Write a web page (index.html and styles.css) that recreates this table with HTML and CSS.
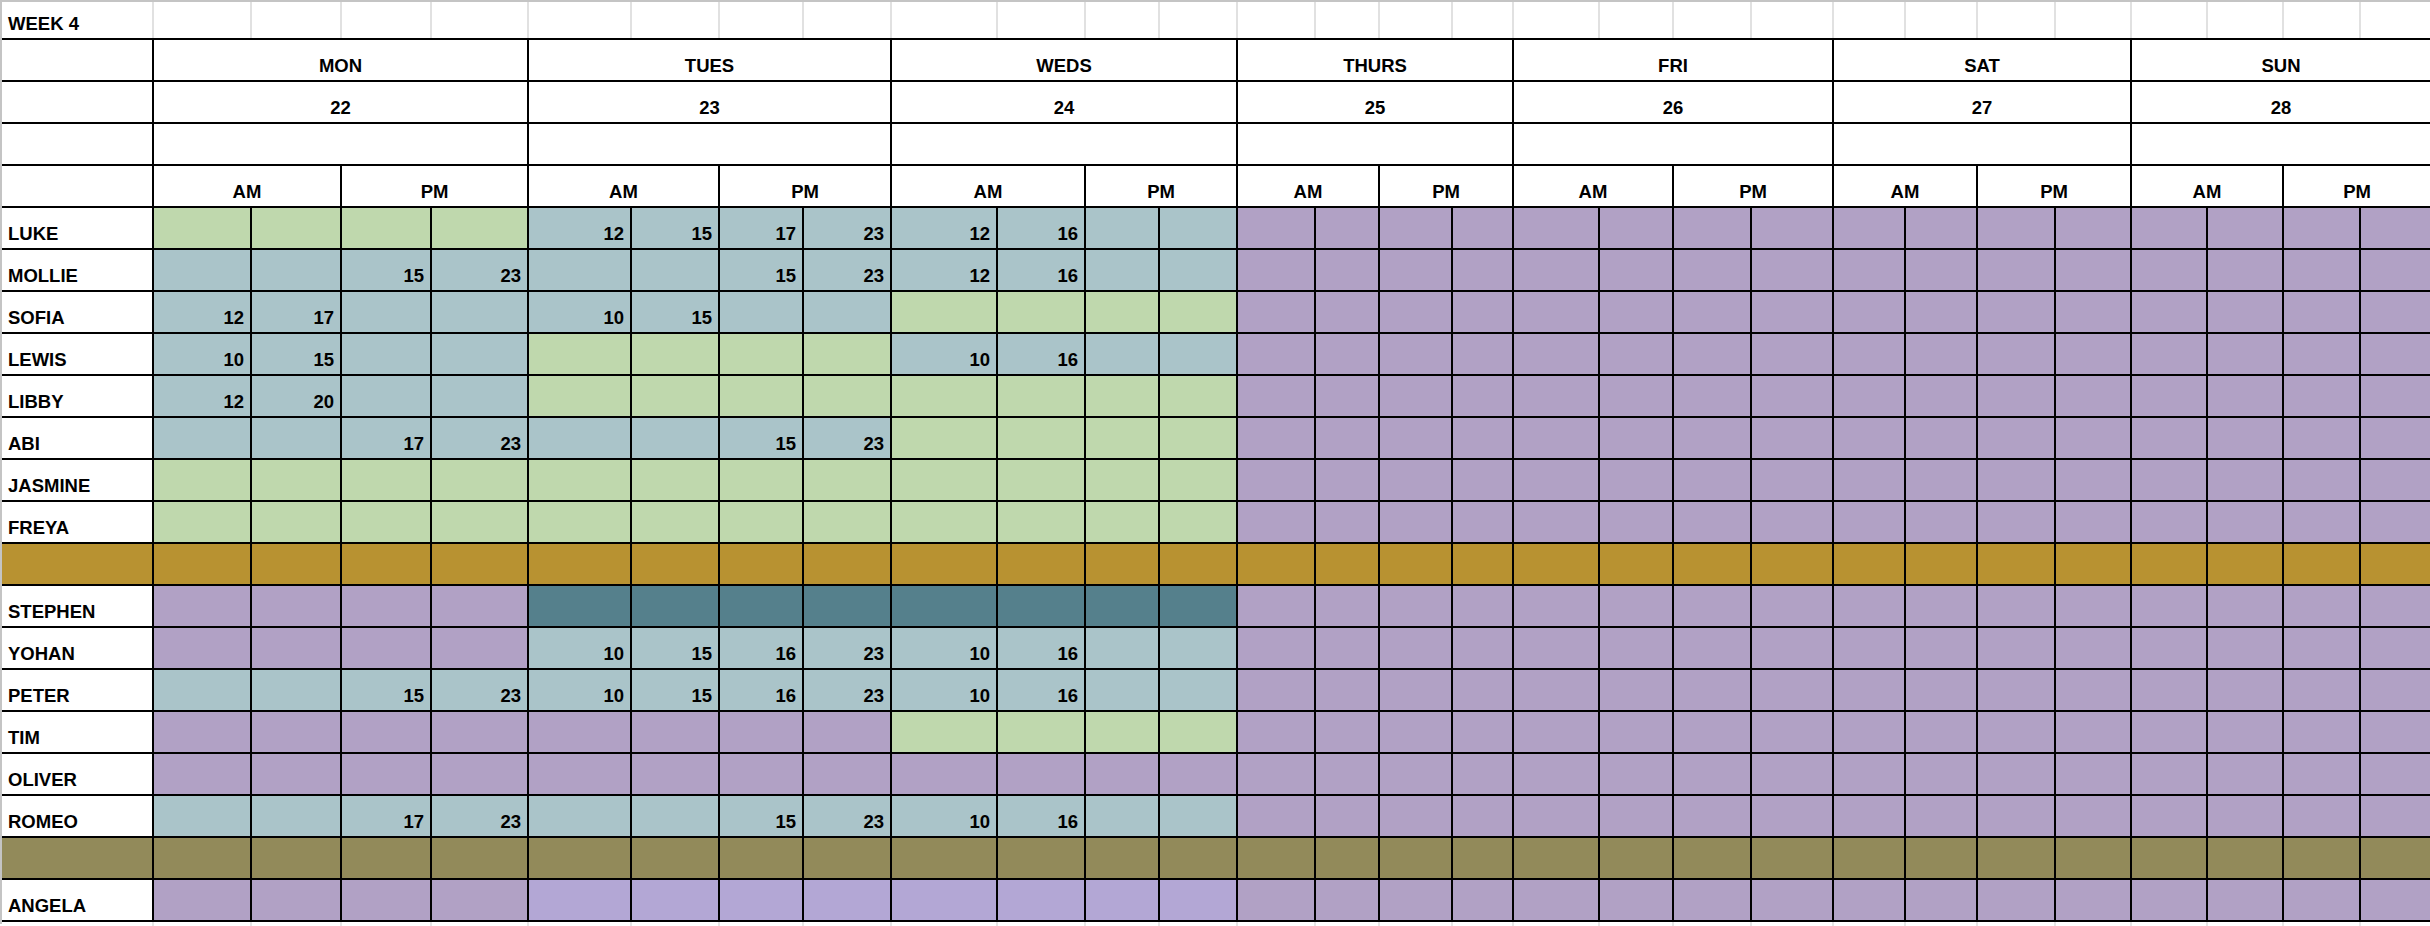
FILE: index.html
```html
<!DOCTYPE html>
<html lang="en">
<head>
<meta charset="utf-8">
<title>Week 4 rota</title>
<link rel="stylesheet" href="styles.css">
</head>
<body>
<div class="sheet">
  <div class="top cols">
    <div class="w nm">WEEK 4</div>
    <div class="w"></div><div class="w"></div><div class="w"></div><div class="w"></div>
    <div class="w"></div><div class="w"></div><div class="w"></div><div class="w"></div>
    <div class="w"></div><div class="w"></div><div class="w"></div><div class="w"></div>
    <div class="w"></div><div class="w"></div><div class="w"></div><div class="w"></div>
    <div class="w"></div><div class="w"></div><div class="w"></div><div class="w"></div>
    <div class="w"></div><div class="w"></div><div class="w"></div><div class="w"></div>
    <div class="w"></div><div class="w"></div><div class="w"></div><div class="w"></div>
  </div>

  <div class="grid cols">
    <div class="h"></div>
    <div class="h d4">MON</div><div class="h d4">TUES</div><div class="h d4">WEDS</div><div class="h d4">THURS</div><div class="h d4">FRI</div><div class="h d4">SAT</div><div class="h d4">SUN</div>

    <div class="h"></div>
    <div class="h d4">22</div><div class="h d4">23</div><div class="h d4">24</div><div class="h d4">25</div><div class="h d4">26</div><div class="h d4">27</div><div class="h d4">28</div>

    <div class="h"></div>
    <div class="h d4"></div><div class="h d4"></div><div class="h d4"></div><div class="h d4"></div><div class="h d4"></div><div class="h d4"></div><div class="h d4"></div>

    <div class="h"></div>
    <div class="h d2">AM</div><div class="h d2">PM</div><div class="h d2">AM</div><div class="h d2">PM</div><div class="h d2">AM</div><div class="h d2">PM</div><div class="h d2">AM</div><div class="h d2">PM</div><div class="h d2">AM</div><div class="h d2">PM</div><div class="h d2">AM</div><div class="h d2">PM</div><div class="h d2">AM</div><div class="h d2">PM</div>

    <!-- LUKE -->
    <div class="nm">LUKE</div>
    <div class="c g"></div><div class="c g"></div><div class="c g"></div><div class="c g"></div>
    <div class="c b">12</div><div class="c b">15</div><div class="c b">17</div><div class="c b">23</div>
    <div class="c b">12</div><div class="c b">16</div><div class="c b"></div><div class="c b"></div>
    <div class="c p"></div><div class="c p"></div><div class="c p"></div><div class="c p"></div>
    <div class="c p"></div><div class="c p"></div><div class="c p"></div><div class="c p"></div>
    <div class="c p"></div><div class="c p"></div><div class="c p"></div><div class="c p"></div>
    <div class="c p"></div><div class="c p"></div><div class="c p"></div><div class="c p"></div>

    <!-- MOLLIE -->
    <div class="nm">MOLLIE</div>
    <div class="c b"></div><div class="c b"></div><div class="c b">15</div><div class="c b">23</div>
    <div class="c b"></div><div class="c b"></div><div class="c b">15</div><div class="c b">23</div>
    <div class="c b">12</div><div class="c b">16</div><div class="c b"></div><div class="c b"></div>
    <div class="c p"></div><div class="c p"></div><div class="c p"></div><div class="c p"></div>
    <div class="c p"></div><div class="c p"></div><div class="c p"></div><div class="c p"></div>
    <div class="c p"></div><div class="c p"></div><div class="c p"></div><div class="c p"></div>
    <div class="c p"></div><div class="c p"></div><div class="c p"></div><div class="c p"></div>

    <!-- SOFIA -->
    <div class="nm">SOFIA</div>
    <div class="c b">12</div><div class="c b">17</div><div class="c b"></div><div class="c b"></div>
    <div class="c b">10</div><div class="c b">15</div><div class="c b"></div><div class="c b"></div>
    <div class="c g"></div><div class="c g"></div><div class="c g"></div><div class="c g"></div>
    <div class="c p"></div><div class="c p"></div><div class="c p"></div><div class="c p"></div>
    <div class="c p"></div><div class="c p"></div><div class="c p"></div><div class="c p"></div>
    <div class="c p"></div><div class="c p"></div><div class="c p"></div><div class="c p"></div>
    <div class="c p"></div><div class="c p"></div><div class="c p"></div><div class="c p"></div>

    <!-- LEWIS -->
    <div class="nm">LEWIS</div>
    <div class="c b">10</div><div class="c b">15</div><div class="c b"></div><div class="c b"></div>
    <div class="c g"></div><div class="c g"></div><div class="c g"></div><div class="c g"></div>
    <div class="c b">10</div><div class="c b">16</div><div class="c b"></div><div class="c b"></div>
    <div class="c p"></div><div class="c p"></div><div class="c p"></div><div class="c p"></div>
    <div class="c p"></div><div class="c p"></div><div class="c p"></div><div class="c p"></div>
    <div class="c p"></div><div class="c p"></div><div class="c p"></div><div class="c p"></div>
    <div class="c p"></div><div class="c p"></div><div class="c p"></div><div class="c p"></div>

    <!-- LIBBY -->
    <div class="nm">LIBBY</div>
    <div class="c b">12</div><div class="c b">20</div><div class="c b"></div><div class="c b"></div>
    <div class="c g"></div><div class="c g"></div><div class="c g"></div><div class="c g"></div>
    <div class="c g"></div><div class="c g"></div><div class="c g"></div><div class="c g"></div>
    <div class="c p"></div><div class="c p"></div><div class="c p"></div><div class="c p"></div>
    <div class="c p"></div><div class="c p"></div><div class="c p"></div><div class="c p"></div>
    <div class="c p"></div><div class="c p"></div><div class="c p"></div><div class="c p"></div>
    <div class="c p"></div><div class="c p"></div><div class="c p"></div><div class="c p"></div>

    <!-- ABI -->
    <div class="nm">ABI</div>
    <div class="c b"></div><div class="c b"></div><div class="c b">17</div><div class="c b">23</div>
    <div class="c b"></div><div class="c b"></div><div class="c b">15</div><div class="c b">23</div>
    <div class="c g"></div><div class="c g"></div><div class="c g"></div><div class="c g"></div>
    <div class="c p"></div><div class="c p"></div><div class="c p"></div><div class="c p"></div>
    <div class="c p"></div><div class="c p"></div><div class="c p"></div><div class="c p"></div>
    <div class="c p"></div><div class="c p"></div><div class="c p"></div><div class="c p"></div>
    <div class="c p"></div><div class="c p"></div><div class="c p"></div><div class="c p"></div>

    <!-- JASMINE -->
    <div class="nm">JASMINE</div>
    <div class="c g"></div><div class="c g"></div><div class="c g"></div><div class="c g"></div>
    <div class="c g"></div><div class="c g"></div><div class="c g"></div><div class="c g"></div>
    <div class="c g"></div><div class="c g"></div><div class="c g"></div><div class="c g"></div>
    <div class="c p"></div><div class="c p"></div><div class="c p"></div><div class="c p"></div>
    <div class="c p"></div><div class="c p"></div><div class="c p"></div><div class="c p"></div>
    <div class="c p"></div><div class="c p"></div><div class="c p"></div><div class="c p"></div>
    <div class="c p"></div><div class="c p"></div><div class="c p"></div><div class="c p"></div>

    <!-- FREYA -->
    <div class="nm">FREYA</div>
    <div class="c g"></div><div class="c g"></div><div class="c g"></div><div class="c g"></div>
    <div class="c g"></div><div class="c g"></div><div class="c g"></div><div class="c g"></div>
    <div class="c g"></div><div class="c g"></div><div class="c g"></div><div class="c g"></div>
    <div class="c p"></div><div class="c p"></div><div class="c p"></div><div class="c p"></div>
    <div class="c p"></div><div class="c p"></div><div class="c p"></div><div class="c p"></div>
    <div class="c p"></div><div class="c p"></div><div class="c p"></div><div class="c p"></div>
    <div class="c p"></div><div class="c p"></div><div class="c p"></div><div class="c p"></div>

    <!-- divider gold -->
    <div class="c o"></div>
    <div class="c o"></div><div class="c o"></div><div class="c o"></div><div class="c o"></div>
    <div class="c o"></div><div class="c o"></div><div class="c o"></div><div class="c o"></div>
    <div class="c o"></div><div class="c o"></div><div class="c o"></div><div class="c o"></div>
    <div class="c o"></div><div class="c o"></div><div class="c o"></div><div class="c o"></div>
    <div class="c o"></div><div class="c o"></div><div class="c o"></div><div class="c o"></div>
    <div class="c o"></div><div class="c o"></div><div class="c o"></div><div class="c o"></div>
    <div class="c o"></div><div class="c o"></div><div class="c o"></div><div class="c o"></div>

    <!-- STEPHEN -->
    <div class="nm">STEPHEN</div>
    <div class="c p"></div><div class="c p"></div><div class="c p"></div><div class="c p"></div>
    <div class="c t"></div><div class="c t"></div><div class="c t"></div><div class="c t"></div>
    <div class="c t"></div><div class="c t"></div><div class="c t"></div><div class="c t"></div>
    <div class="c p"></div><div class="c p"></div><div class="c p"></div><div class="c p"></div>
    <div class="c p"></div><div class="c p"></div><div class="c p"></div><div class="c p"></div>
    <div class="c p"></div><div class="c p"></div><div class="c p"></div><div class="c p"></div>
    <div class="c p"></div><div class="c p"></div><div class="c p"></div><div class="c p"></div>

    <!-- YOHAN -->
    <div class="nm">YOHAN</div>
    <div class="c p"></div><div class="c p"></div><div class="c p"></div><div class="c p"></div>
    <div class="c b">10</div><div class="c b">15</div><div class="c b">16</div><div class="c b">23</div>
    <div class="c b">10</div><div class="c b">16</div><div class="c b"></div><div class="c b"></div>
    <div class="c p"></div><div class="c p"></div><div class="c p"></div><div class="c p"></div>
    <div class="c p"></div><div class="c p"></div><div class="c p"></div><div class="c p"></div>
    <div class="c p"></div><div class="c p"></div><div class="c p"></div><div class="c p"></div>
    <div class="c p"></div><div class="c p"></div><div class="c p"></div><div class="c p"></div>

    <!-- PETER -->
    <div class="nm">PETER</div>
    <div class="c b"></div><div class="c b"></div><div class="c b">15</div><div class="c b">23</div>
    <div class="c b">10</div><div class="c b">15</div><div class="c b">16</div><div class="c b">23</div>
    <div class="c b">10</div><div class="c b">16</div><div class="c b"></div><div class="c b"></div>
    <div class="c p"></div><div class="c p"></div><div class="c p"></div><div class="c p"></div>
    <div class="c p"></div><div class="c p"></div><div class="c p"></div><div class="c p"></div>
    <div class="c p"></div><div class="c p"></div><div class="c p"></div><div class="c p"></div>
    <div class="c p"></div><div class="c p"></div><div class="c p"></div><div class="c p"></div>

    <!-- TIM -->
    <div class="nm">TIM</div>
    <div class="c p"></div><div class="c p"></div><div class="c p"></div><div class="c p"></div>
    <div class="c p"></div><div class="c p"></div><div class="c p"></div><div class="c p"></div>
    <div class="c g"></div><div class="c g"></div><div class="c g"></div><div class="c g"></div>
    <div class="c p"></div><div class="c p"></div><div class="c p"></div><div class="c p"></div>
    <div class="c p"></div><div class="c p"></div><div class="c p"></div><div class="c p"></div>
    <div class="c p"></div><div class="c p"></div><div class="c p"></div><div class="c p"></div>
    <div class="c p"></div><div class="c p"></div><div class="c p"></div><div class="c p"></div>

    <!-- OLIVER -->
    <div class="nm">OLIVER</div>
    <div class="c p"></div><div class="c p"></div><div class="c p"></div><div class="c p"></div>
    <div class="c p"></div><div class="c p"></div><div class="c p"></div><div class="c p"></div>
    <div class="c p"></div><div class="c p"></div><div class="c p"></div><div class="c p"></div>
    <div class="c p"></div><div class="c p"></div><div class="c p"></div><div class="c p"></div>
    <div class="c p"></div><div class="c p"></div><div class="c p"></div><div class="c p"></div>
    <div class="c p"></div><div class="c p"></div><div class="c p"></div><div class="c p"></div>
    <div class="c p"></div><div class="c p"></div><div class="c p"></div><div class="c p"></div>

    <!-- ROMEO -->
    <div class="nm">ROMEO</div>
    <div class="c b"></div><div class="c b"></div><div class="c b">17</div><div class="c b">23</div>
    <div class="c b"></div><div class="c b"></div><div class="c b">15</div><div class="c b">23</div>
    <div class="c b">10</div><div class="c b">16</div><div class="c b"></div><div class="c b"></div>
    <div class="c p"></div><div class="c p"></div><div class="c p"></div><div class="c p"></div>
    <div class="c p"></div><div class="c p"></div><div class="c p"></div><div class="c p"></div>
    <div class="c p"></div><div class="c p"></div><div class="c p"></div><div class="c p"></div>
    <div class="c p"></div><div class="c p"></div><div class="c p"></div><div class="c p"></div>

    <!-- divider olive -->
    <div class="c v"></div>
    <div class="c v"></div><div class="c v"></div><div class="c v"></div><div class="c v"></div>
    <div class="c v"></div><div class="c v"></div><div class="c v"></div><div class="c v"></div>
    <div class="c v"></div><div class="c v"></div><div class="c v"></div><div class="c v"></div>
    <div class="c v"></div><div class="c v"></div><div class="c v"></div><div class="c v"></div>
    <div class="c v"></div><div class="c v"></div><div class="c v"></div><div class="c v"></div>
    <div class="c v"></div><div class="c v"></div><div class="c v"></div><div class="c v"></div>
    <div class="c v"></div><div class="c v"></div><div class="c v"></div><div class="c v"></div>

    <!-- ANGELA -->
    <div class="nm">ANGELA</div>
    <div class="c p"></div><div class="c p"></div><div class="c p"></div><div class="c p"></div>
    <div class="c l"></div><div class="c l"></div><div class="c l"></div><div class="c l"></div>
    <div class="c l"></div><div class="c l"></div><div class="c l"></div><div class="c l"></div>
    <div class="c p"></div><div class="c p"></div><div class="c p"></div><div class="c p"></div>
    <div class="c p"></div><div class="c p"></div><div class="c p"></div><div class="c p"></div>
    <div class="c p"></div><div class="c p"></div><div class="c p"></div><div class="c p"></div>
    <div class="c p"></div><div class="c p"></div><div class="c p"></div><div class="c p"></div>
  </div>

  <div class="foot cols">
    <div class="w"></div>
    <div class="w"></div><div class="w"></div><div class="w"></div><div class="w"></div>
    <div class="w"></div><div class="w"></div><div class="w"></div><div class="w"></div>
    <div class="w"></div><div class="w"></div><div class="w"></div><div class="w"></div>
    <div class="w"></div><div class="w"></div><div class="w"></div><div class="w"></div>
    <div class="w"></div><div class="w"></div><div class="w"></div><div class="w"></div>
    <div class="w"></div><div class="w"></div><div class="w"></div><div class="w"></div>
    <div class="w"></div><div class="w"></div><div class="w"></div><div class="w"></div>
  </div>
</div>
</body>
</html>
```

FILE: styles.css
```css
html, body {
  margin: 0;
  padding: 0;
  background: #ffffff;
}

body {
  width: 2430px;
  height: 926px;
  overflow: hidden;
  font-family: "Liberation Sans", Arial, sans-serif;
  font-weight: bold;
  font-size: 18.5px;
  line-height: 1;
  color: #000000;
}

.sheet {
  border-left: 2px solid #c4c4c4;
  border-top: 2px solid #c4c4c4;
  height: 924px;
  box-sizing: border-box;
  width: 2430px;
}

.cols {
  display: grid;
  grid-template-columns:
    150px
    96px 88px 88px 95px
    101px 86px 82px 86px
    104px 86px 72px 76px
    76px 62px 71px 59px
    84px 72px 76px 80px
    70px 70px 76px 74px
    74px 74px 75px 69px;
  column-gap: 2px;
}

.top {
  background: #e1e1e1;
  height: 36px;
}

.w {
  background: #ffffff;
  display: flex;
  align-items: flex-end;
  padding: 0 6px 5px;
  box-sizing: border-box;
}

.grid {
  background: #000000;
  border-top: 2px solid #000000;
  border-bottom: 2px solid #000000;
  grid-auto-rows: 40px;
  row-gap: 2px;
}

.foot {
  background: #e6e6e6;
  height: 4px;
}

.grid > div {
  display: flex;
  align-items: flex-end;
  box-sizing: border-box;
  padding: 0 6px 5px;
  min-width: 0;
}

.h {
  background: #ffffff;
  justify-content: center;
}

.d4 { grid-column: span 4; }
.d2 { grid-column: span 2; }

.nm {
  background: #ffffff;
  justify-content: flex-start;
}

.c { justify-content: flex-end; }

.g { background: #bfd8ad; }
.b { background: #aac4c9; }
.p { background: #b1a1c5; }
.o { background: #b89231; }
.t { background: #55808c; }
.v { background: #928a5a; }
.l { background: #b3a7d5; }
```
